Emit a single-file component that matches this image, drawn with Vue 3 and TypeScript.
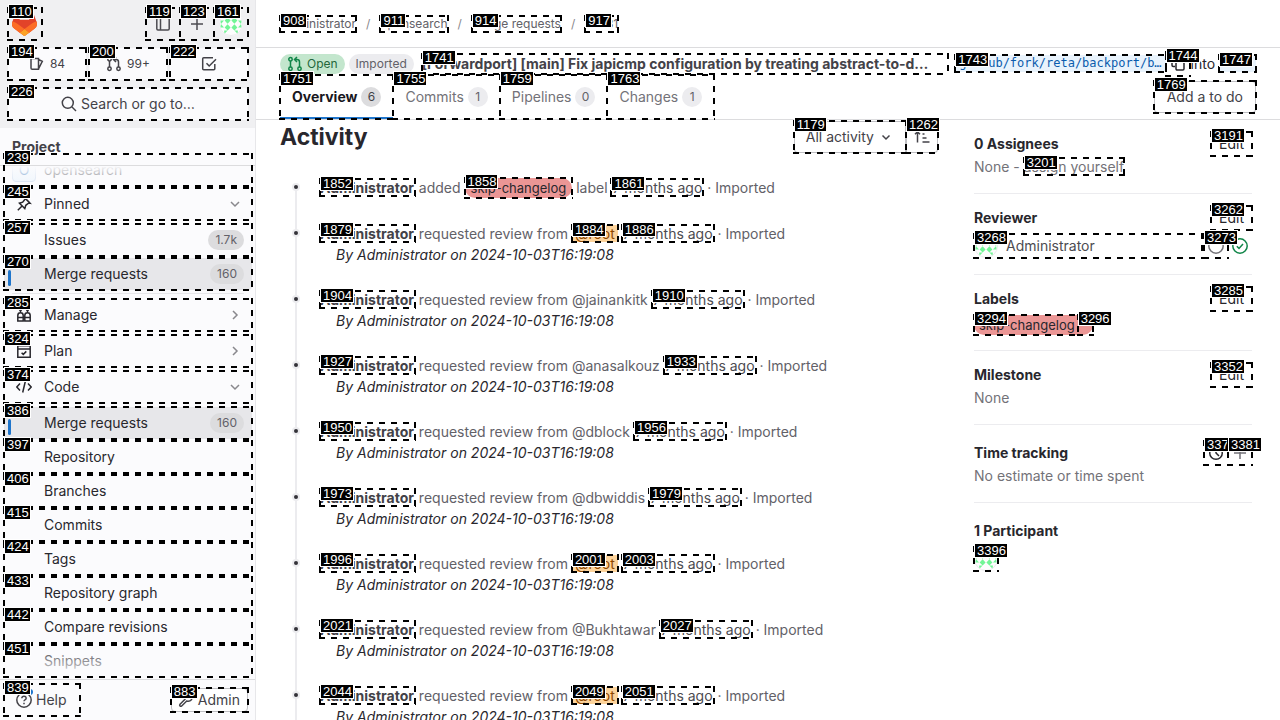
<script setup lang="ts">
interface NavItem {
  mark: number
  text: string
  icon?: string
  count?: string
  active?: boolean
  chevron?: 'down' | 'right'
}
interface Note {
  marks: number[]
  target: string
  highlighted?: boolean
}

const icons: Record<string, string> = {
  pin: 'M1.8 14.2l4-4M3.5 7.2l5.3 5.3 1-3.2 3-2.3 1.2.2-5.2-5.2.2 1.2-2.3 3zM9 2l5 5',
  manage: 'M1.8 14V8.500a2.700 2.700 0 0 1 5.400 0V14zM8.800 14V8.500a2.700 2.700 0 0 1 5.400 0V14zM1.800 10.500h12.400M4.500 5.600V3.200M11.500 5.600V3.200M3 3h3M10 3h3',
  plan: 'M1.8 2.800h12.400v11.400H1.800zM1.800 6h12.400M5.600 9.700l1.700 1.700 3-3',
  code: 'M4 4.500L.800 8 4 11.500M12 4.500L15.200 8 12 11.500M9.300 2.500l-2.600 11',
}

const pinned: NavItem[] = [
  { mark: 257, text: 'Issues', count: '1.7k' },
  { mark: 270, text: 'Merge requests', count: '160', active: true },
]
const groups: NavItem[] = [
  { mark: 285, text: 'Manage', icon: 'manage', chevron: 'right' },
  { mark: 324, text: 'Plan', icon: 'plan', chevron: 'right' },
  { mark: 374, text: 'Code', icon: 'code', chevron: 'down' },
]
const codeItems: NavItem[] = [
  { mark: 386, text: 'Merge requests', count: '160', active: true },
  { mark: 397, text: 'Repository' },
  { mark: 406, text: 'Branches' },
  { mark: 415, text: 'Commits' },
  { mark: 424, text: 'Tags' },
  { mark: 433, text: 'Repository graph' },
  { mark: 442, text: 'Compare revisions' },
  { mark: 451, text: 'Snippets' },
]
const crumbs = [
  { mark: 908, text: 'Administrator' },
  { mark: 911, text: 'opensearch' },
  { mark: 914, text: 'Merge requests' },
  { mark: 917, text: '!16131' },
]
const tabs = [
  { mark: 1751, text: 'Overview', count: 6, active: true },
  { mark: 1755, text: 'Commits', count: 1, active: false },
  { mark: 1759, text: 'Pipelines', count: 0, active: false },
  { mark: 1763, text: 'Changes', count: 1, active: false },
]
const notes: Note[] = [
  { marks: [1879, 1884, 1886], target: '@root', highlighted: true },
  { marks: [1904, 0, 1910], target: '@jainankitk' },
  { marks: [1927, 0, 1933], target: '@anasalkouz' },
  { marks: [1950, 0, 1956], target: '@dblock' },
  { marks: [1973, 0, 1979], target: '@dbwiddis' },
  { marks: [1996, 2001, 2003], target: '@root', highlighted: true },
  { marks: [2021, 0, 2027], target: '@Bukhtawar' },
  { marks: [2044, 2049, 2051], target: '@root', highlighted: true },
]
</script>

<template>
  <div class="page">
    <svg class="defs" aria-hidden="true">
      <symbol id="identicon" viewBox="0 0 24 24">
        <circle cx="12" cy="12" r="12" fill="#fdfdfd" />
        <g fill="#72f596">
          <path d="M8.600 5.400l3 3.200-3 3.200-3-3.200zM15.400 5.400l3 3.200-3 3.200-3-3.200zM8.600 12.200l3 3.200-3 3.200-3-3.200zM15.400 12.200l3 3.200-3 3.200-3-3.200z" />
          <path d="M5.200 5.400V2l3.400 3.400zM18.800 5.400V2l-3.400 3.400zM5.200 18.600V22l3.400-3.400zM18.800 18.600V22l-3.400-3.400z" />
          <path d="M1 8.600h4L2 12zM23 8.600h-4l3 3.400zM1 15.400h4L2 12zM23 15.400h-4l3-3.400z" />
        </g>
        <circle cx="12" cy="12" r="11.5" fill="none" stroke="#ececee" />
      </symbol>
      <symbol id="merge" viewBox="0 0 16 16">
        <g fill="none" stroke="currentColor" stroke-width="1.5">
          <circle cx="3.500" cy="3.200" r="1.700" /><circle cx="3.500" cy="12.800" r="1.700" /><circle cx="12.500" cy="12.800" r="1.700" />
          <path d="M3.500 5v6M12.500 11V6q0-2.500-2.500-2.500H8M10 1L7.500 3.500 10 6" />
        </g>
      </symbol>
    </svg>

    <aside class="sidebar">
      <div class="top">
        <div class="bar">
          <a href="#" class="m logo" aria-label="Homepage">
            <svg width="25" height="24" viewBox="0 0 25 24">
              <path fill="#E24329" d="m24.507 9.500-.034-.090L21.082.562a.896.896 0 0 0-1.694.091l-2.290 7.010H7.825L5.535.653a.898.898 0 0 0-1.694-.090L.451 9.411.416 9.500a6.297 6.297 0 0 0 2.090 7.278l.012.010.030.022 5.160 3.867 2.560 1.935 1.554 1.176a1.051 1.051 0 0 0 1.268 0l1.555-1.176 2.560-1.935 5.197-3.890.014-.010A6.297 6.297 0 0 0 24.507 9.500Z" />
              <path fill="#FC6D26" d="m24.507 9.500-.034-.090a11.440 11.440 0 0 0-4.560 2.051l-7.447 5.632 4.742 3.584 5.197-3.890.014-.010A6.297 6.297 0 0 0 24.507 9.500Z" />
              <path fill="#FCA326" d="m7.707 20.677 2.560 1.935 1.555 1.176a1.051 1.051 0 0 0 1.268 0l1.555-1.176 2.560-1.935-4.743-3.584-4.755 3.584Z" />
              <path fill="#FC6D26" d="M5.010 11.461a11.430 11.430 0 0 0-4.560-2.050L.416 9.500a6.297 6.297 0 0 0 2.090 7.278l.012.010.030.022 5.160 3.867 4.745-3.584-7.444-5.632Z" />
            </svg>
            <i class="mark"><b>110</b></i>
          </a>
          <span class="grow"></span>
          <button class="m square" aria-label="Hide sidebar">
            <svg class="ic" viewBox="0 0 16 16"><path d="M3 2h10q1.200 0 1.200 1.200v9.600q0 1.200-1.200 1.200H3q-1.200 0-1.200-1.200V3.200Q1.800 2 3 2zM5.500 2v12" /></svg>
            <i class="mark"><b>119</b></i>
          </button>
          <button class="m square" aria-label="Create new">
            <svg class="ic" viewBox="0 0 16 16"><path d="M8 2v12M2 8h12" /></svg>
            <i class="mark"><b>123</b></i>
          </button>
          <button class="m square" aria-label="User menu">
            <svg class="avatar"><use href="#identicon" /></svg>
            <i class="mark"><b>161</b></i>
          </button>
        </div>
        <div class="counters">
          <a href="#" class="m counter">
            <svg class="ic" viewBox="0 0 16 16"><path d="M2 2.500h7.500v10.800H3.200Q2 13.300 2 12zM9.500 3.500l3.800 1.800-3.800 7.500" /></svg>84
            <i class="mark"><b>194</b></i>
          </a>
          <a href="#" class="m counter">
            <svg class="ic"><use href="#merge" /></svg>99+
            <i class="mark"><b>200</b></i>
          </a>
          <a href="#" class="m counter" aria-label="To-do list">
            <svg class="ic" viewBox="0 0 16 16"><path d="M13.800 8v4.800q0 1-1 1H2.700q-1 0-1-1V2.700q0-1 1-1H12M5.500 7.200l2.700 2.800L15 3.200" /></svg>
            <i class="mark"><b>222</b></i>
          </a>
        </div>
        <button class="m search">
          <svg class="ic" viewBox="0 0 16 16"><circle cx="6.800" cy="6.800" r="5.500" /><path d="M11 11l4 4" /></svg>Search or go to…
          <i class="mark"><b>226</b></i>
        </button>
      </div>

      <div class="panel-title">Project</div>
      <nav class="menu">
        <a href="#" class="m item context">
          <span class="clip"><span class="project-avatar">O</span>opensearch</span>
          <i class="mark"><b>239</b></i>
        </a>
        <button class="m item group">
          <svg class="ic" viewBox="0 0 16 16"><path :d="icons.pin" /></svg>
          <span class="grow">Pinned</span>
          <svg class="chev" viewBox="0 0 12 12"><path d="M2 4l4 4 4-4" /></svg>
          <i class="mark"><b>245</b></i>
        </button>
        <div class="sub">
          <a v-for="it in pinned" :key="it.mark" href="#" class="m item" :class="{ active: it.active }">
            <span class="grow">{{ it.text }}</span><span class="count">{{ it.count }}</span>
            <i class="mark"><b>{{ it.mark }}</b></i>
          </a>
        </div>
        <hr />
        <button v-for="it in groups" :key="it.mark" class="m item group">
          <svg class="ic" viewBox="0 0 16 16"><path :d="icons[it.icon ?? 'plan']" /></svg>
          <span class="grow">{{ it.text }}</span>
          <svg class="chev" viewBox="0 0 12 12"><path :d="it.chevron === 'down' ? 'M2 4l4 4 4-4' : 'M4 2l4 4-4 4'" /></svg>
          <i class="mark"><b>{{ it.mark }}</b></i>
        </button>
        <div class="sub">
          <a v-for="it in codeItems" :key="it.mark" href="#" class="m item" :class="{ active: it.active }">
            <span class="grow">{{ it.text }}</span><span v-if="it.count" class="count">{{ it.count }}</span>
            <i class="mark"><b>{{ it.mark }}</b></i>
          </a>
        </div>
        <div class="fade fade-top"></div>
        <div class="fade fade-bottom"></div>
      </nav>
      <div class="footer">
        <button class="m help">
          <svg class="ic" viewBox="0 0 16 16"><circle cx="8" cy="8" r="7.200" /><path d="M5.800 6.200q.200-2 2.200-2t2.200 1.800q0 1.200-1.200 1.800-1 .500-1 1.500M8 10.800v1.400" /></svg>Help
          <span class="dot"></span>
          <i class="mark"><b>839</b></i>
        </button>
        <a href="#" class="m admin">
          <svg class="ic" viewBox="0 0 16 16"><path d="M2 12.300l5-5q-.800-3 1.300-4.700 1.700-1.300 3.700-.600L9.700 4.300l.300 1.700 1.700.300L14 4q.700 2-.600 3.700-1.700 2.100-4.700 1.300l-5 5q-1 .700-1.700 0t0-1.700z" /></svg>Admin
          <i class="mark"><b>883</b></i>
        </a>
      </div>
    </aside>

    <div class="main">
      <nav class="crumbs" aria-label="Breadcrumb">
        <template v-for="(c, n) in crumbs" :key="c.mark">
          <span v-if="n" class="slash">/</span>
          <a href="#" class="m inl">{{ c.text }}<i class="mark"><b>{{ c.mark }}</b></i></a>
        </template>
      </nav>

      <header class="mr-header">
        <div class="title-row">
          <span class="badge open"><svg class="ic"><use href="#merge" /></svg>Open</span>
          <span class="badge">Imported</span>
          <a href="#" class="m title"><span class="ellipsis">[Forwardport] [main] Fix japicmp configuration by treating abstract-to-d…</span><i class="mark"><b>1741</b></i></a>
          <a href="#" class="m inl ref">github/fork/reta/backport/b…<i class="mark"><b>1743</b></i></a>
          <button class="m copy" aria-label="Copy branch name">
            <svg class="ic" viewBox="0 0 16 16"><path d="M5 10.500H3.200Q2 10.500 2 9.300V3.200Q2 2 3.200 2h5.100q1.200 0 1.200 1.200M7.200 6h5.600Q14 6 14 7.200v5.600q0 1.200-1.200 1.200H7.200Q6 14 6 12.800V7.200Q6 6 7.200 6z" /></svg>
            <i class="mark"><b>1744</b></i>
          </button>
          <span class="into">into</span>
          <a href="#" class="m inl ref">main<i class="mark"><b>1747</b></i></a>
        </div>
        <div class="tab-row">
          <a v-for="t in tabs" :key="t.mark" href="#" class="m tab" :class="{ current: t.active }">
            {{ t.text }}<span class="pill">{{ t.count }}</span>
            <i class="mark"><b>{{ t.mark }}</b></i>
          </a>
          <span class="grow"></span>
          <button class="m btn todo">Add a to do<i class="mark"><b>1769</b></i></button>
        </div>
      </header>

      <div class="content">
        <section class="activity">
          <div class="activity-head">
            <h2>Activity</h2>
            <button class="m btn filter">All activity<svg class="ic" viewBox="0 0 16 16"><path d="M4.500 6.500L8 10l3.500-3.500" /></svg><i class="mark"><b>1179</b></i></button>
            <button class="m btn sort" aria-label="Sort direction">
              <svg class="ic" viewBox="0 0 16 16"><path d="M3.500 13.500V3M1 5.200L3.500 2.700 6 5.200M8.500 5h2M8.500 9h4M8.500 13h7" /></svg>
              <i class="mark"><b>1262</b></i>
            </button>
          </div>
          <ul class="notes">
            <li>
              <div class="line"><a href="#" class="m inl name">Administrator<i class="mark"><b>1852</b></i></a> added <a href="#" class="m label">skip-changelog<i class="mark"><b>1858</b></i></a> label <a href="#" class="m inl time">7 months ago<i class="mark"><b>1861</b></i></a> · Imported</div>
            </li>
            <li v-for="n in notes" :key="n.marks[0]">
              <div class="line"><a href="#" class="m inl name">Administrator<i class="mark"><b>{{ n.marks[0] }}</b></i></a> requested review from <a v-if="n.highlighted" href="#" class="m inl me">{{ n.target }}<i class="mark"><b>{{ n.marks[1] }}</b></i></a><span v-else>{{ n.target }}</span>&#32;<a href="#" class="m inl time">7 months ago<i class="mark"><b>{{ n.marks[2] }}</b></i></a> · Imported</div>
              <p>By Administrator on 2024-10-03T16:19:08</p>
            </li>
          </ul>
        </section>

        <aside class="details">
          <section>
            <div class="head"><h3>0 Assignees</h3><button class="m edit">Edit<i class="mark"><b>3191</b></i></button></div>
            <div class="text">None - <a href="#" class="m inl">assign yourself<i class="mark"><b>3201</b></i></a></div>
          </section>
          <section>
            <div class="head"><h3>Reviewer</h3><button class="m edit">Edit<i class="mark"><b>3262</b></i></button></div>
            <div class="reviewer">
              <a href="#" class="m person"><svg class="avatar"><use href="#identicon" /></svg>Administrator<i class="mark"><b>3268</b></i></a>
              <button class="m mini" aria-label="Re-request review"><svg class="ic dim" viewBox="0 0 16 16"><circle cx="8" cy="8" r="7.200" /></svg><i class="mark"><b>3273</b></i></button>
              <span class="mini"><svg class="ic ok" viewBox="0 0 16 16"><circle cx="8" cy="8" r="7.200" /><path d="M4.800 8.200L7 10.400l4-4.500" /></svg></span>
            </div>
          </section>
          <section class="labels">
            <div class="head"><h3>Labels</h3><button class="m edit">Edit<i class="mark"><b>3285</b></i></button></div>
            <div class="label wide"><a href="#" class="m label-text">skip-changelog<i class="mark"><b>3294</b></i></a><button class="m remove" aria-label="Remove label"><i class="mark"><b>3296</b></i></button></div>
          </section>
          <section>
            <div class="head"><h3>Milestone</h3><button class="m edit">Edit<i class="mark"><b>3352</b></i></button></div>
            <div class="text">None</div>
          </section>
          <section class="roomy">
            <div class="head"><h3>Time tracking</h3>
              <button class="m mini" aria-label="Set estimate"><svg class="ic" viewBox="0 0 16 16"><circle cx="8" cy="8" r="6.300" /><path d="M8 4.500V8l3 3" /></svg><i class="mark"><b>3375</b></i></button>
              <button class="m mini" aria-label="Add time entry"><svg class="ic dim" viewBox="0 0 16 16"><path d="M8 2v12M2 8h12" /></svg><i class="mark"><b>3381</b></i></button>
            </div>
            <div class="text">No estimate or time spent</div>
          </section>
          <section class="roomy">
            <div class="head"><h3>1 Participant</h3></div>
            <a href="#" class="m participant" aria-label="Administrator"><svg class="avatar"><use href="#identicon" /></svg><i class="mark"><b>3396</b></i></a>
          </section>
        </aside>
      </div>
    </div>
  </div>
</template>

<style>
body {
  margin: 0;
}
</style>

<style scoped>
* {
  box-sizing: border-box;
}
.page {
  display: flex;
  height: 100vh;
  overflow: hidden;
  background: #fff;
  color: #28272d;
  font: 14px/20px Inter, "Noto Sans", sans-serif;
}
.defs {
  position: absolute;
  width: 0;
  height: 0;
}
a {
  color: inherit;
  text-decoration: none;
}
button {
  border: 0;
  padding: 0;
  background: none;
  color: inherit;
  font: inherit;
  text-align: left;
}
h2, h3, p, ul {
  margin: 0;
  padding: 0;
}
.grow {
  flex: 1;
}

/* Numbered dashed frames over interactive elements */
.m {
  position: relative;
}
.mark {
  position: absolute;
  inset: -1px;
  z-index: 5;
  background:
    repeating-linear-gradient(90deg, #000 0 6px, transparent 6px 12px) top / 100% 2px no-repeat,
    repeating-linear-gradient(90deg, #000 0 6px, transparent 6px 12px) bottom / 100% 2px no-repeat,
    repeating-linear-gradient(#000 0 6px, transparent 6px 12px) left / 2px 100% no-repeat,
    repeating-linear-gradient(#000 0 6px, transparent 6px 12px) right / 2px 100% no-repeat;
  font-style: normal;
  pointer-events: none;
}
.mark b {
  position: absolute;
  top: -3px;
  left: 1px;
  padding: 0 1px 0 2px;
  border: 1px solid #fff;
  background: #000;
  color: #fff;
  font: 13px/13px "Liberation Sans", Arial, sans-serif;
  white-space: nowrap;
}
.inl > .mark b {
  top: -2px;
}
.ic {
  flex: none;
  width: 16px;
  height: 16px;
  fill: none;
  stroke: currentColor;
  stroke-width: 1.5;
}
.avatar {
  flex: none;
  display: block;
  width: 24px;
  height: 24px;
}

/* Sidebar */
.sidebar {
  flex: none;
  display: flex;
  flex-direction: column;
  width: 256px;
  border-right: 1px solid #e7e7ea;
  background: #fbfbfd;
}
.top {
  padding: 8px 7px 8px 8px;
  background: #f0f0f2;
}
.bar {
  display: flex;
  height: 32px;
  color: #4c4b51;
}
.logo {
  display: flex;
  align-items: center;
  padding: 0 5px 0 4px;
}
.square {
  display: flex;
  align-items: center;
  justify-content: center;
  width: 34px;
}
.counters {
  display: flex;
  gap: 3px;
  margin: 8px 0;
}
.counter {
  flex: 1;
  display: flex;
  align-items: center;
  justify-content: center;
  gap: 5px;
  height: 32px;
  border-radius: 4px;
  background: #fbfbfd;
  color: #434248;
  font-size: 12px;
}
.search {
  display: flex;
  align-items: center;
  justify-content: center;
  gap: 4px;
  width: 100%;
  height: 32px;
  border-radius: 4px;
  background: #fbfbfd;
  color: #434248;
}
.panel-title {
  height: 38px;
  padding: 9px 12px 0;
  border-bottom: 1px solid #dcdcde;
  color: #434248;
  font-weight: 700;
}
.menu {
  position: relative;
  flex: 1;
  min-height: 0;
  margin-top: -12px;
  padding: 0 3px 0 4px;
}
.item {
  display: flex;
  align-items: center;
  width: 100%;
  height: 32px;
  padding: 0 6px 0 40px;
  border-radius: 4px;
}
.context {
  padding-left: 8px;
  margin-bottom: 2px;
}
.clip {
  display: flex;
  align-items: center;
  gap: 8px;
  height: 32px;
  clip-path: inset(12px 0 0 0);
}
.project-avatar {
  width: 24px;
  height: 24px;
  border: 1px solid #c6d6ec;
  border-radius: 4px;
  background: #e9f3fc;
  color: #0b5cad;
  line-height: 22px;
  text-align: center;
}
.group {
  gap: 12px;
  margin-bottom: 4px;
  padding: 0 11px 0 12px;
}
.sub {
  display: flex;
  flex-direction: column;
  gap: 2px;
}
.chev {
  width: 12px;
  height: 12px;
  fill: none;
  stroke: #89888d;
  stroke-width: 1.5;
}
.active {
  background: #e7e7ea;
}
.active::before {
  content: "";
  position: absolute;
  left: 4px;
  top: 12px;
  bottom: 4px;
  width: 3px;
  border-radius: 2px;
  background: #1f75cb;
}
.count {
  margin-right: 2px;
  padding: 0 7px;
  border-radius: 10px;
  background: #dcdcde;
  color: #626168;
  font-size: 12px;
  line-height: 20px;
}
hr {
  height: 1px;
  margin: 3px 8px 5px;
  border: 0;
  background: #e7e7ea;
}
.fade {
  position: absolute;
  left: 0;
  right: 0;
  pointer-events: none;
}
.fade-top {
  top: 12px;
  height: 28px;
  background: linear-gradient(#fbfbfd 0%, #fbfbfd00);
}
.fade-bottom {
  bottom: 0;
  height: 36px;
  background: linear-gradient(#fbfbfd00, #fbfbfdff);
}
.footer {
  display: flex;
  align-items: center;
  justify-content: space-between;
  height: 41px;
  padding: 0 7px 0 4px;
  border-top: 1px solid #dcdcde;
  color: #434248;
}
.help {
  display: flex;
  align-items: center;
  gap: 4px;
  height: 32px;
  padding: 0 13px 0 12px;
}
.dot {
  position: absolute;
  top: 5px;
  left: 23px;
  width: 6px;
  height: 6px;
  border-radius: 3px;
  background: #1f75cb;
}
.admin {
  display: flex;
  align-items: center;
  gap: 4px;
  height: 24px;
  padding: 0 7px 0 6px;
  border: 1px solid #bfbfc3;
  border-radius: 4px;
  background: #fff;
}
.admin > .mark {
  inset: -2px;
}

/* Header */
.main {
  flex: 1;
  min-width: 0;
  display: flex;
  flex-direction: column;
}
.crumbs {
  flex: none;
  display: flex;
  align-items: center;
  gap: 9px;
  height: 48px;
  padding: 0 24px;
  border-bottom: 1px solid #dcdcde;
  color: #626168;
  font-size: 12px;
  line-height: 16px;
}
.slash {
  padding: 0 1px;
  color: #89888d;
}
.mr-header {
  flex: none;
  height: 72px;
  padding: 4px 24px 0;
  border-bottom: 1px solid #dcdcde;
}
.title-row {
  display: flex;
  align-items: center;
  height: 23px;
}
.badge {
  flex: none;
  display: flex;
  align-items: center;
  gap: 4px;
  margin-right: 4px;
  padding: 0 7px;
  border-radius: 10px;
  background: #ececef;
  color: #626168;
  font-size: 12px;
}
.open {
  background: #c3e6cd;
  color: #24663b;
}
.open .ic {
  color: #108548;
}
.title {
  flex: 1;
  min-width: 0;
  margin: 0 7px 0 4px;
  color: #434248;
  font-weight: 700;
}
.ellipsis {
  display: block;
  overflow: hidden;
  text-overflow: ellipsis;
  white-space: nowrap;
}
.ref {
  flex: none;
  padding: 0 4px;
  border-radius: 4px;
  background: #e9f3fc;
  color: #0b5cad;
  font: 12px/17px "DejaVu Sans Mono", monospace;
}
.copy {
  display: flex;
  align-items: center;
  justify-content: center;
  width: 24px;
  height: 24px;
}
.into {
  margin: 0 4px 0 1px;
}
.tab-row {
  display: flex;
}
.tab {
  display: flex;
  align-items: center;
  gap: 4px;
  height: 44px;
  padding: 0 12px;
  color: #737278;
}
.current {
  color: #18171d;
  font-weight: 700;
  box-shadow: inset 0 -2px #1f75cb;
}
.pill {
  width: 20px;
  border-radius: 10px;
  background: #ececef;
  color: #626168;
  font-size: 12px;
  font-weight: 400;
  text-align: center;
}
.current .pill {
  background: #dcdcde;
  color: #434248;
}
.btn {
  display: flex;
  align-items: center;
  height: 32px;
  border-radius: 4px;
  box-shadow: inset 0 0 0 1px #bfbfc3;
  color: #434248;
}
.todo {
  margin-top: 6px;
  padding: 0 13px;
}

/* Content */
.content {
  flex: 1;
  min-height: 0;
  display: flex;
  gap: 36px;
  padding: 0 28px 0 24px;
}
.activity {
  flex: 1;
  min-width: 0;
}
.activity-head {
  display: flex;
  align-items: center;
  height: 32px;
  margin-top: 1px;
}
h2 {
  flex: 1;
  font-size: 23px;
  font-weight: 700;
  line-height: 28px;
}
.filter {
  gap: 4px;
  padding: 0 12px;
  border-radius: 4px 0 0 4px;
}
.sort {
  padding: 0 8px;
  border-radius: 0 4px 4px 0;
}
.notes {
  position: relative;
  margin-top: 25px;
  padding-left: 40px;
  list-style: none;
}
.notes::before {
  content: "";
  position: absolute;
  left: 15px;
  top: 10px;
  bottom: 0;
  width: 2px;
  background: #ececef;
}
.notes li {
  position: relative;
  min-height: 22px;
  margin-bottom: 24px;
}
.notes li::before {
  content: "";
  position: absolute;
  left: -28px;
  top: 5px;
  width: 4px;
  height: 4px;
  border: 2px solid #ececef;
  border-radius: 50%;
  background: #333238;
}
.line {
  height: 20px;
  color: #626168;
  white-space: nowrap;
}
.name {
  padding-right: 1px;
  color: #434248;
  font-weight: 700;
}
.time {
  padding: 0 1px;
  color: #4c4b51;
}
.me {
  padding: 0 3px;
  border-radius: 2px;
  background: #fdd49c;
  color: #8f4700;
}
.notes p {
  padding-left: 16px;
  font-style: italic;
  line-height: 22px;
}
.label {
  display: inline-block;
  padding: 0 6px;
  border-radius: 10px;
  background: #eb9695;
  color: #28272d;
  font-size: 13px;
  line-height: 20px;
}

/* Details */
.details {
  flex: none;
  width: 278px;
}
.details section {
  padding: 12px 0 16px;
  border-bottom: 1px solid #ececef;
}
.details .labels {
  padding-bottom: 15px;
}
.details .roomy {
  padding-top: 16px;
}
.details section:last-child {
  border: 0;
}
.head {
  display: flex;
  align-items: center;
  height: 24px;
}
h3 {
  flex: 1;
  font-size: 14px;
  font-weight: 700;
}
.edit {
  height: 24px;
  padding: 0 8px;
}
.text {
  margin-top: 1px;
  color: #737278;
}
.reviewer {
  display: flex;
  margin-top: 4px;
  color: #4c4b51;
}
.person {
  flex: 1;
  display: flex;
  align-items: center;
  gap: 8px;
  margin-right: 2px;
}
.mini {
  display: flex;
  align-items: center;
  justify-content: center;
  width: 24px;
  height: 24px;
}
.dim {
  color: #737278;
}
.ok {
  color: #108548;
}
.wide {
  display: flex;
  width: fit-content;
  margin-top: 4px;
  padding: 0;
}
.label-text {
  padding: 0 3px 0 5px;
}
.remove {
  width: 15px;
}
.participant {
  display: block;
  width: 24px;
  margin-top: 4px;
}
</style>
